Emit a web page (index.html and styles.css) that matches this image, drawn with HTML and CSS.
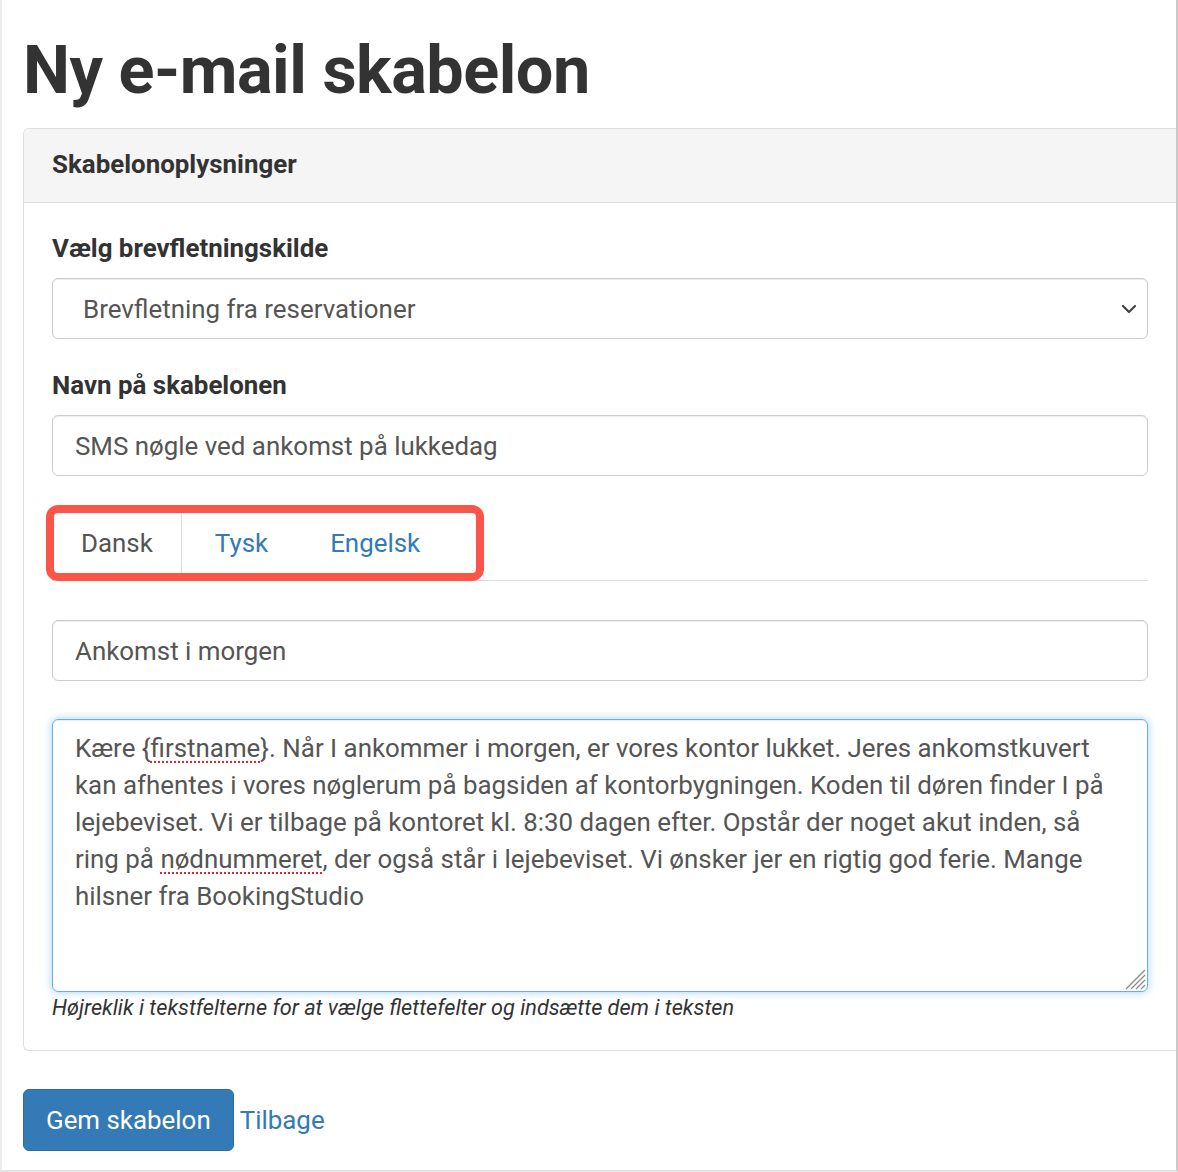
FILE: index.html
```html
<!DOCTYPE html>
<html lang="da">
<head>
<meta charset="utf-8">
<title>Ny e-mail skabelon</title>
<link rel="stylesheet" href="styles.css">
</head>
<body>
<div class="window">
  <h1 class="page-title">Ny e-mail skabelon</h1>
  <div class="panel">
    <div class="panel-heading">Skabelonoplysninger</div>
    <div class="panel-body">
      <div class="form-group">
        <label class="label">Vælg brevfletningskilde</label>
        <div class="select-box">
          <span class="select-text">Brevfletning fra reservationer</span>
          <svg class="chevron" width="16" height="10" viewBox="0 0 16 10"><path d="M2 2 L8 8 L14 2" fill="none" stroke="#444" stroke-width="2.2" stroke-linecap="round" stroke-linejoin="round"/></svg>
        </div>
      </div>
      <div class="form-group">
        <label class="label">Navn på skabelonen</label>
        <input class="field" type="text" value="SMS nøgle ved ankomst på lukkedag">
      </div>
      <div class="tabs-wrap">
        <ul class="nav-tabs">
          <li class="tab active">Dansk</li>
          <li class="tab">Tysk</li>
          <li class="tab">Engelsk</li>
        </ul>
        <div class="highlight"></div>
      </div>
      <input class="field subject" type="text" value="Ankomst i morgen">
      <div class="textarea">Kære {<span class="spell">firstname</span>}. Når I ankommer i morgen, er vores kontor lukket. Jeres ankomstkuvert<br>kan afhentes i vores nøglerum på bagsiden af kontorbygningen. Koden til døren finder I på<br>lejebeviset. Vi er tilbage på kontoret kl. 8:30 dagen efter. Opstår der noget akut inden, så<br>ring på <span class="spell">nødnummeret</span>, der også står i lejebeviset. Vi ønsker jer en rigtig god ferie. Mange<br>hilsner fra BookingStudio<svg class="grip" width="24" height="24" viewBox="0 0 24 24"><path d="M23 4 L4 23 M23 9 L9 23 M23 14 L14 23 M23 19 L19 23" stroke="#8a8a8a" stroke-width="1.3" fill="none"/></svg></div>
      <p class="help">Højreklik i tekstfelterne for at vælge flettefelter og indsætte dem i teksten</p>
    </div>
  </div>
  <div class="actions">
    <button class="btn-primary" type="button">Gem skabelon</button>
    <a class="link" href="#">Tilbage</a>
  </div>
</div>
</body>
</html>
```
FILE: styles.css
```css
* { box-sizing: border-box; }
html, body { margin: 0; padding: 0; background: #fff; }
body { font-family: Roboto, "Liberation Sans", Arial, sans-serif; color: #333; font-size: 25.9px; }

.window {
  width: 1178px;
  height: 1172px;
  overflow: hidden;
  border-left: 2px solid #ececec;
  border-right: 2px solid #c9c9c9;
  border-bottom: 2px solid #e4e4e4;
  padding-left: 21px;
}

.page-title {
  margin: 30px 0 18px 0;
  font-size: 66.6px;
  line-height: 80px;
  font-weight: 700;
  color: #333;
  letter-spacing: -0.5px;
}

.panel {
  border: 1px solid #ddd;
  border-right: none;
  border-radius: 6px 0 0 6px;
  margin-bottom: 38px;
}

.panel-heading {
  background: #f5f5f5;
  border-bottom: 1px solid #ddd;
  border-radius: 6px 0 0 0;
  padding: 17px 28px 19px 28px;
  font-size: 25.9px;
  line-height: 37px;
  font-weight: 700;
  color: #333;
}

.panel-body {
  padding: 27px 28px 27px 28px;
}

.form-group { margin-bottom: 28px; }

.label {
  display: block;
  font-size: 25.9px;
  line-height: 37px;
  font-weight: 700;
  margin-bottom: 11px;
  color: #333;
}

.select-box {
  height: 61px;
  border: 1px solid #ccc;
  border-radius: 6px;
  box-shadow: inset 0 1px 1px rgba(0,0,0,.075);
  display: flex;
  align-items: center;
  justify-content: space-between;
  padding: 0 10px 0 30px;
  font-size: 25.9px;
  color: #555;
}

.field {
  display: block;
  width: 100%;
  height: 61px;
  border: 1px solid #ccc;
  border-radius: 6px;
  box-shadow: inset 0 1px 1px rgba(0,0,0,.075);
  padding: 0 22px;
  font-family: Roboto, "Liberation Sans", Arial, sans-serif;
  font-size: 25.9px;
  color: #555;
  background: #fff;
  outline: none;
}

.tabs-wrap { position: relative; }

.nav-tabs {
  list-style: none;
  margin: 0;
  padding: 0;
  display: flex;
  border-bottom: 1px solid #ddd;
  height: 77px;
}

.tab {
  height: 77px;
  padding: 0 28px;
  margin-right: 4px;
  display: flex;
  align-items: center;
  font-size: 25.9px;
  color: #337ab7;
  border: 1px solid transparent;
  border-radius: 6px 6px 0 0;
}
.tab.active {
  color: #555;
  border-color: #ddd;
  border-top-color: transparent;
  border-bottom-color: #fff;
}

.highlight {
  position: absolute;
  left: -6px;
  top: 1px;
  width: 438px;
  height: 76px;
  border: 8px solid #fb5549;
  border-radius: 12px;
  pointer-events: none;
}

.subject { margin-top: 39px; }

.textarea {
  position: relative;
  margin-top: 38px;
  height: 273px;
  border: 1px solid #66afe9;
  border-radius: 6px;
  box-shadow: inset 0 1px 1px rgba(0,0,0,.075), 0 0 8px rgba(102,175,233,.6);
  padding: 10px 22px;
  font-size: 25.9px;
  line-height: 37px;
  color: #555;
}

.spell {
  text-decoration: underline dotted #e0252b;
  text-decoration-thickness: 2px;
  text-underline-offset: 4px;
}

.grip {
  position: absolute;
  right: 1px;
  bottom: 1px;
}

.help {
  margin: 0;
  font-size: 21.7px;
  line-height: 31px;
  font-style: italic;
  color: #333;
}

.actions {
  display: flex;
  align-items: center;
  gap: 6px;
}

.btn-primary {
  height: 62px;
  padding: 0 22px;
  border: 1px solid #2e6da4;
  border-radius: 6px;
  background: #337ab7;
  color: #fff;
  font-family: Roboto, "Liberation Sans", Arial, sans-serif;
  font-size: 25.9px;
}

.link {
  color: #337ab7;
  text-decoration: none;
  font-size: 25.9px;
}
```
